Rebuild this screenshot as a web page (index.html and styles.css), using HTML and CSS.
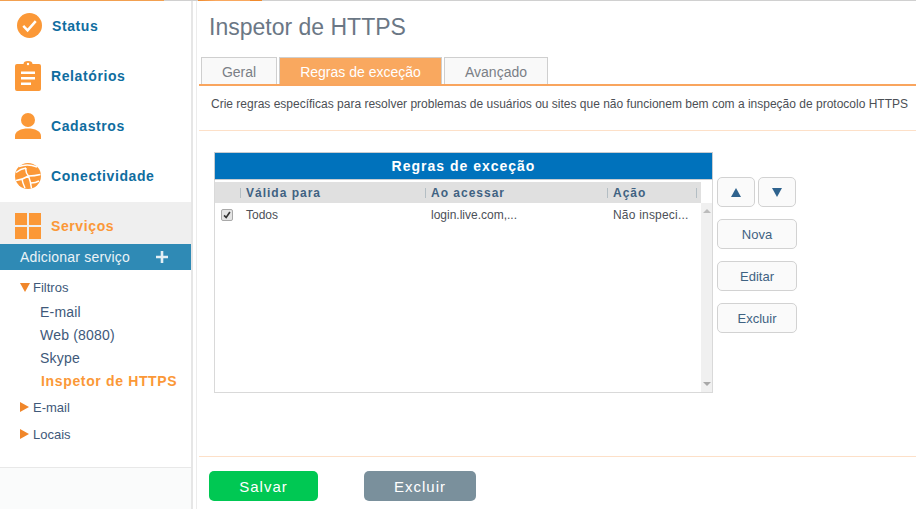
FILE: index.html
```html
<!DOCTYPE html>
<html lang="pt-BR">
<head>
    <meta charset="UTF-8">
    <title>Inspetor de HTTPS</title>
    <link rel="stylesheet" href="styles.css">
</head>
<body>
    <div class="top-line"></div>
    <div class="page">
        <div class="sidebar">
            <div class="nav-item">
                <svg class="nav-icon icon-status" viewBox="0 0 26 26"><circle cx="13" cy="13" r="13" fill="#fb9837"/><path d="M6.500 13.500l4.500 4.500 8.500-9.500" fill="none" stroke="#fff" stroke-width="2.600"/></svg>
                <span class="nav-label">Status</span>
            </div>
            <div class="nav-item">
                <svg class="nav-icon icon-report" viewBox="0 0 26 30"><path d="M2 3h6.500a4.500 3 0 0 1 9 0H24a2 2 0 0 1 2 2V28a2 2 0 0 1-2 2H2a2 2 0 0 1-2-2V5a2 2 0 0 1 2-2z" fill="#fb9837"/><circle cx="13" cy="3" r="1.200" fill="#fff"/><path d="M6 10.500h14v2.500H6zM6 16h14v2.500H6zM6 21.500h10V24H6z" fill="#fff"/></svg>
                <span class="nav-label">Relatórios</span>
            </div>
            <div class="nav-item">
                <svg class="nav-icon" viewBox="0 0 26 26"><circle cx="13" cy="7" r="7" fill="#fb9837"/><path d="M0 26v-3c0-5 6-7.500 13-7.500s13 2.500 13 7.500v3z" fill="#fb9837"/></svg>
                <span class="nav-label">Cadastros</span>
            </div>
            <div class="nav-item">
                <svg class="nav-icon" viewBox="0 0 26 26"><circle cx="13" cy="13" r="13" fill="#fb9837"/><path d="M4 3.500c5-2 12-2 18 .5M1 9.500c3-2.500 6-4 10-4.500M11 5c-.5 3-.5 5 2.500 8M13.500 13c4 0 8-.5 12-1.500M13.500 13c1.500 4 2.500 8 3 12.500M13.500 13c-4 2.500-8 4-12.500 4.500M7 16c.5 3.500 1.500 6 3 9M16 20c3 0 5.500-.5 8-2" fill="none" stroke="#fff" stroke-width="1.500"/></svg>
                <span class="nav-label">Conectividade</span>
            </div>
            <div class="nav-item nav-active">
                <svg class="nav-icon" viewBox="0 0 26 26"><path d="M0 0h12v12H0zM14 0h12v12H14zM0 14h12v12H0zM14 14h12v12H14z" fill="#fb9837"/></svg>
                <span class="nav-label">Serviços</span>
            </div>
            <div class="add-service">
                <span>Adicionar serviço</span>
                <svg class="plus" viewBox="0 0 12 12"><path d="M4.700 0h2.600v4.700H12v2.600H7.300V12H4.700V7.300H0V4.700h4.700z" fill="#e3eff5"/></svg>
            </div>
            <div class="tree">
                <div class="tree-group tree-open"><span class="arrow-down"></span>Filtros</div>
                <div class="tree-leaf">E-mail</div>
                <div class="tree-leaf">Web (8080)</div>
                <div class="tree-leaf">Skype</div>
                <div class="tree-leaf tree-current">Inspetor de HTTPS</div>
                <div class="tree-group tree-email"><span class="arrow-right"></span>E-mail</div>
                <div class="tree-group tree-locais"><span class="arrow-right"></span>Locais</div>
            </div>
            <div class="sidebar-footer"></div>
        </div>

        <div class="main">
            <h1 class="title">Inspetor de HTTPS</h1>
            <div class="tabs">
                <div class="tab tab-geral">Geral</div>
                <div class="tab tab-active">Regras de exceção</div>
                <div class="tab tab-avancado">Avançado</div>
            </div>
            <p class="description">Crie regras específicas para resolver problemas de usuários ou sites que não funcionem bem com a inspeção de protocolo HTTPS</p>

            <div class="content">
                <div class="grid">
                    <div class="grid-title">Regras de exceção</div>
                    <div class="grid-body">
                        <div class="grid-table">
                            <div class="grid-head">
                                <div class="col col-check"></div>
                                <div class="col col-valid">Válida para</div>
                                <div class="col col-access">Ao acessar</div>
                                <div class="col col-action">Ação</div>
                            </div>
                            <div class="grid-row">
                                <div class="cell-check">
                                    <div class="checkbox"><svg viewBox="0 0 12 12"><path d="M2.500 6.500l2.500 2.500 4.500-6.500" fill="none" stroke="#333" stroke-width="2"/></svg></div>
                                </div>
                                <div class="cell cell-valid">Todos</div>
                                <div class="cell cell-access">login.live.com,...</div>
                                <div class="cell cell-action">Não inspeci...</div>
                            </div>
                        </div>
                        <div class="scrollbar">
                            <div class="scroll-corner"></div>
                            <div class="scroll-track">
                                <span class="scroll-up"></span>
                                <span class="scroll-down"></span>
                            </div>
                        </div>
                    </div>
                </div>
                <div class="side-buttons">
                    <div class="move-buttons">
                        <button class="btn btn-move"><span class="tri-up"></span></button>
                        <button class="btn btn-move"><span class="tri-down"></span></button>
                    </div>
                    <button class="btn">Nova</button>
                    <button class="btn">Editar</button>
                    <button class="btn">Excluir</button>
                </div>
            </div>

            <div class="footer">
                <button class="action action-save">Salvar</button>
                <button class="action action-delete">Excluir</button>
            </div>
        </div>
    </div>
</body>
</html>
```

FILE: styles.css
```css
html, body {
    margin: 0;
    padding: 0;
    height: 100%;
    overflow: hidden;
}

body {
    font-family: "Liberation Sans", Arial, sans-serif;
    background: #fff;
    color: #4a6078;
}

.top-line {
    height: 1px;
    background: linear-gradient(to right, #f2a050 0, #f2a050 164px, #d0d0d0 164px, #d0d0d0 198px, #f08a2c 198px, #f9a85f 216px, #f9a85f 250px, #f08a2c 250px, #f08a2c 262px, #d0d0d0 262px);
}

.page {
    display: flex;
    height: 508px;
}

/* Sidebar */
.sidebar {
    width: 191px;
    flex-shrink: 0;
    display: flex;
    flex-direction: column;
    background: #fff;
    border-right: 2px solid #e6e6e6;
}

.nav-item {
    height: 50px;
    display: flex;
    align-items: center;
    padding-left: 15px;
}

.nav-icon {
    width: 26px;
    height: 26px;
    flex-shrink: 0;
}

.icon-status {
    width: 25px;
    height: 25px;
    margin: 0 0 1px 2px;
}

.icon-report {
    height: 30px;
}

.nav-label {
    margin-left: 10px;
    font-size: 14px;
    font-weight: bold;
    letter-spacing: 0.6px;
    color: #0f6d9f;
}

.nav-active {
    height: 42px;
    margin-top: 1px;
    padding-top: 6px;
    box-sizing: border-box;
    background: #efefef;
}

.nav-active .nav-label {
    color: #fb9837;
}

.add-service {
    height: 26px;
    display: flex;
    align-items: center;
    justify-content: space-between;
    padding: 0 23px 0 20px;
    background: #2f8ab5;
    color: #eaf3f7;
    font-size: 14px;
    letter-spacing: 0.2px;
}

.plus {
    width: 12px;
    height: 12px;
}

.tree {
    flex: 1;
    padding-top: 8px;
    font-size: 13px;
    color: #40597a;
}

.tree-group {
    display: flex;
    align-items: center;
    height: 18px;
    padding-left: 20px;
}

.tree-email {
    margin-top: 5px;
}

.tree-locais {
    margin-top: 9px;
}

.arrow-down {
    width: 0;
    height: 0;
    margin-right: 3px;
    border-left: 5px solid transparent;
    border-right: 5px solid transparent;
    border-top: 9px solid #f0862a;
}

.arrow-right {
    width: 0;
    height: 0;
    margin-right: 4px;
    border-top: 5px solid transparent;
    border-bottom: 5px solid transparent;
    border-left: 9px solid #f0862a;
}

.tree-leaf {
    height: 23px;
    line-height: 23px;
    padding-left: 40px;
    font-size: 14px;
    letter-spacing: 0.2px;
}

.tree-open {
    margin-bottom: 5px;
}

.tree-current {
    padding-left: 41px;
    font-weight: bold;
    letter-spacing: 0.65px;
    color: #fb9837;
}

.sidebar-footer {
    height: 41px;
    background: #fafbfb;
    border-top: 1px solid #e8e8e8;
}

/* Main area */
.main {
    flex: 1;
    min-width: 0;
    margin-left: 3px;
    padding-left: 2px;
    border-left: 1px solid #ececec;
    display: flex;
    flex-direction: column;
}

.title {
    margin: 0;
    padding: 12px 0 0 10px;
    height: 44px;
    font-size: 23px;
    line-height: 28px;
    font-weight: normal;
    color: #6b7785;
}

.tabs {
    display: flex;
    gap: 2px;
    height: 27px;
    padding-left: 2px;
    border-bottom: 2px solid #f9a55e;
}

.tab {
    height: 27px;
    box-sizing: border-box;
    border: 1px solid #cfcfcf;
    border-bottom: none;
    background: #f9f9f9;
    text-align: center;
    font-size: 14px;
    line-height: 28px;
    color: #7b7f86;
}

.tab-geral {
    width: 76px;
}

.tab-active {
    width: 163px;
    background: #f9a85f;
    color: #fff;
}

.tab-avancado {
    width: 104px;
}

.description {
    margin: 0;
    padding: 11px 0 0 12px;
    height: 33px;
    border-bottom: 1px solid #fde0c8;
    font-size: 12px;
    line-height: 14px;
    color: #4c4f55;
    white-space: nowrap;
}

.content {
    flex: 1;
    display: flex;
    padding: 21px 0 0 15px;
    border-bottom: 1px solid #fde0c8;
}

/* Rules grid */
.grid {
    width: 499px;
    height: 241px;
    box-sizing: border-box;
    border: 1px solid #d9d9d9;
    border-top: none;
    display: flex;
    flex-direction: column;
}

.grid-title {
    height: 28px;
    margin: 0 -1px;
    box-sizing: border-box;
    border: 1px solid #c8ccd0;
    background: #0072bc;
    color: #fff;
    text-align: center;
    font-size: 14px;
    font-weight: bold;
    line-height: 26px;
    letter-spacing: 1px;
}

.grid-body {
    flex: 1;
    display: flex;
    padding-top: 2px;
}

.grid-table {
    flex: 1;
    min-width: 0;
}

.grid-head {
    display: flex;
    height: 21px;
    background: #e0e0e0;
    font-size: 12px;
    font-weight: bold;
    letter-spacing: 1px;
    color: #3f6282;
}

.col {
    box-sizing: border-box;
    border-left: 1px solid #b4bec4;
    height: 10px;
    margin-top: 6px;
    line-height: 10px;
    padding-left: 5px;
}

.col-check {
    width: 25px;
    border-left: none;
}

.col-valid {
    width: 185px;
}

.col-access {
    width: 182px;
}

.col-action {
    width: 90px;
    border-right: 1px solid #b4bec4;
}

.grid-row {
    display: flex;
    height: 24px;
    align-items: center;
    font-size: 12px;
    color: #4c5058;
}

.cell-check {
    width: 25px;
    padding-left: 6px;
    box-sizing: border-box;
    display: flex;
}

.checkbox {
    width: 12px;
    height: 12px;
    box-sizing: border-box;
    border: 1px solid #a9a9a9;
    border-radius: 2px;
    background: #e4e4e4;
}

.checkbox svg {
    display: block;
    width: 10px;
    height: 10px;
}

.cell {
    box-sizing: border-box;
    padding-left: 6px;
    white-space: nowrap;
}

.cell-valid {
    width: 185px;
}

.cell-access {
    width: 182px;
}

.cell-action {
    width: 90px;
    letter-spacing: 0.2px;
}

.scrollbar {
    width: 11px;
    display: flex;
    flex-direction: column;
}

.scroll-corner {
    height: 21px;
    background: #fff;
}

.scroll-track {
    flex: 1;
    display: flex;
    flex-direction: column;
    justify-content: space-between;
    align-items: center;
    padding: 6px 0;
    background: #f0f0f0;
}

.scroll-up {
    border-left: 4px solid transparent;
    border-right: 4px solid transparent;
    border-bottom: 4px solid #bcbcbc;
}

.scroll-down {
    border-left: 4px solid transparent;
    border-right: 4px solid transparent;
    border-top: 4px solid #a8a8a8;
}

/* Buttons beside the grid */
.side-buttons {
    display: flex;
    flex-direction: column;
    align-items: flex-start;
    gap: 12px;
    margin-left: 4px;
    padding-top: 25px;
}

.move-buttons {
    display: flex;
    gap: 3px;
}

.btn {
    width: 80px;
    height: 30px;
    padding: 0;
    box-sizing: border-box;
    border: 1px solid #d2d2d2;
    border-radius: 5px;
    background: #fafafa;
    font-family: "Liberation Sans", Arial, sans-serif;
    font-size: 13px;
    color: #3f6282;
}

.btn-move {
    width: 38px;
    display: flex;
    align-items: center;
    justify-content: center;
}

.tri-up {
    border-left: 5px solid transparent;
    border-right: 5px solid transparent;
    border-bottom: 9px solid #2f638e;
}

.tri-down {
    border-left: 5px solid transparent;
    border-right: 5px solid transparent;
    border-top: 9px solid #2f638e;
}

/* Bottom bar */
.footer {
    height: 52px;
    display: flex;
    gap: 46px;
    padding: 14px 0 0 10px;
    box-sizing: border-box;
}

.action {
    height: 30px;
    border: none;
    border-radius: 5px;
    padding: 0;
    font-family: "Liberation Sans", Arial, sans-serif;
    font-size: 15px;
    letter-spacing: 1px;
    color: #fff;
}

.action-save {
    width: 109px;
    background: #00c853;
}

.action-delete {
    width: 112px;
    background: #7a909c;
}
```
